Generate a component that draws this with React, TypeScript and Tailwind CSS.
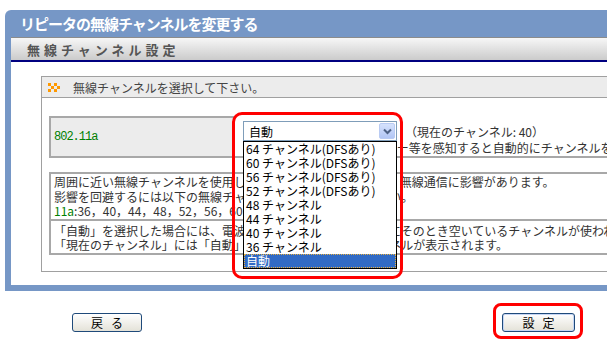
import React from "react";

const items = [
  "64 チャンネル(DFSあり)",
  "60 チャンネル(DFSあり)",
  "56 チャンネル(DFSあり)",
  "52 チャンネル(DFSあり)",
  "48 チャンネル",
  "44 チャンネル",
  "40 チャンネル",
  "36 チャンネル",
  "自動",
];

function Bullet() {
  return (
    <svg width="12" height="9" viewBox="0 0 12 9" className="shrink-0">
      <rect x="0" y="0" width="3" height="3" fill="#ff9900" />
      <rect x="6" y="0" width="3" height="3" fill="#ff9900" />
      <rect x="3" y="3" width="3" height="3" fill="#ff9900" />
      <rect x="9" y="3" width="3" height="3" fill="#ff9900" />
      <rect x="0" y="6" width="3" height="3" fill="#ff9900" />
      <rect x="6" y="6" width="3" height="3" fill="#ff9900" />
    </svg>
  );
}

export default function App() {
  return (
    <div className="relative w-[607px] h-[351px] overflow-hidden bg-white font-['Noto_Sans_CJK_JP','Noto_Sans',sans-serif] text-[12px] leading-[15px] text-[#333]">
      <div className="ml-[5px] mt-[10px] w-[660px] rounded-tl-[6px] bg-[#7697c6] pb-[6px]">
        <div className="h-[27px] pl-[15px] flex items-center text-white text-[15px] font-bold tracking-[-1px] whitespace-nowrap">
          リピータの無線チャンネルを変更する
        </div>
        <div className="ml-[6px] bg-white">
          <div className="h-[23px] border-t border-[#8c8c8c] bg-gradient-to-b from-[#f7f7f7] to-[#cbcbcb] pl-[16px] flex items-center text-[13px] font-bold text-[#555] tracking-[4px] whitespace-nowrap">
            無線チャンネル設定
          </div>
          <div className="h-[2px] bg-[#000080]" />
          <div className="pt-[14px] pl-[30px] pb-[13px]">
            <div className="w-[610px] border border-[#a0a0a0] pb-[16px]">
              <div className="h-[21px] bg-[#ececec] border-b border-[#a0a0a0] flex items-center pl-[6px] gap-[13px] text-[#444] whitespace-nowrap">
                <Bullet />
                <span>無線チャンネルを選択して下さい。</span>
              </div>

              <div className="mt-[18px] ml-[7px] flex h-[42px] border-b-2 border-[#a8a8a8]">
                <div className="w-[186px] shrink-0 bg-[#ececec] border-t-2 border-l-2 border-[#a8a8a8] flex items-center pl-[3px] font-['Liberation_Mono',monospace] tracking-[-1px] text-[#008000]">
                  802.11a
                </div>
                <div className="flex-1 min-w-0 bg-white pl-[8px] whitespace-nowrap">
                  <div className="mt-[5px] flex items-center h-[20px]">
                    <div className="relative shrink-0 w-[154px] h-[20px] border border-[#7f9db9] bg-white flex items-center pl-[5px] text-black">
                      自動
                      <div className="absolute right-[1px] top-[1px] w-[16px] h-[16px] rounded-[2px] border border-[#b9cbf3] bg-gradient-to-b from-[#d6e2fc] to-[#b2c6f5] flex items-center justify-center">
                        <svg width="9" height="7" viewBox="0 0 9 7">
                          <path d="M1 1.5 L4.5 5 L8 1.5" fill="none" stroke="#4d6185" strokeWidth="2" />
                        </svg>
                      </div>
                      <div className="absolute left-[-1px] top-[19px] w-[154px] border border-black bg-white z-10">
                        {items.map((it, i) => (
                          <div
                            key={it}
                            className={
                              i === items.length - 1
                                ? "h-[14px] leading-[14px] pl-[2px] bg-[#316ac5] text-white outline-1 outline-dotted outline-[#e8b040] -outline-offset-1"
                                : "h-[14px] leading-[14px] pl-[2px] text-black"
                            }
                          >
                            {it}
                          </div>
                        ))}
                      </div>
                      <div className="absolute left-[-12px] top-[-10px] w-[171px] h-[167px] border-[3px] border-[#ff0000] rounded-[10px] z-20 pointer-events-none" />
                    </div>
                    <span className="ml-[8px]">（現在のチャンネル: 40）</span>
                  </div>
                  <div className="leading-[14px]">（DFSありの場合は、レーダー等を感知すると自動的にチャンネルを変更します）</div>
                </div>
              </div>

              <div className="mt-[14px] ml-[7px] border-2 border-[#a8a8a8] whitespace-nowrap">
                <div className="pt-[1px] pl-[3px] leading-[14.5px]">
                  <div>周囲に近い無線チャンネルを使用している無線LANがある場合、無線通信に影響があります。</div>
                  <div>影響を回避するには以下の無線チャンネルを使用してみて下さい。</div>
                  <div>
                    <span className="text-[#008000]">11a</span>:36，40，44，48，52，56，60，64
                  </div>
                </div>
                <div className="border-t-2 border-[#a8a8a8] pt-[3px] pl-[3px] leading-[14.5px]">
                  <div>「自動」を選択した場合には、電波状況を調べて、起動した時にそのとき空いているチャンネルが使われます。</div>
                  <div>「現在のチャンネル」には「自動」で実際に選択されたチャンネルが表示されます。</div>
                </div>
              </div>
            </div>
          </div>
        </div>
      </div>

      <div className="mt-[22px] flex justify-between pl-[72px] pr-[32px]">
        <button className="w-[70px] h-[19px] rounded-[3px] border border-[#1f4a7a] bg-gradient-to-b from-white to-[#e4e2d8] flex items-center justify-center gap-[8px] text-black text-[12px]">
          <span>戻</span>
          <span>る</span>
        </button>
        <div className="relative">
          <button className="w-[73px] h-[19px] rounded-[3px] border border-[#1f4a7a] bg-gradient-to-b from-white to-[#e4e2d8] flex items-center justify-center gap-[8px] text-black text-[12px] shadow-[inset_0_0_0_1px_#c6d6f4]">
            <span>設</span>
            <span>定</span>
          </button>
          <div className="absolute left-[-9px] top-[-10px] w-[90px] h-[36px] border-[3px] border-[#ff0000] rounded-[8px] pointer-events-none" />
        </div>
      </div>
    </div>
  );
}
